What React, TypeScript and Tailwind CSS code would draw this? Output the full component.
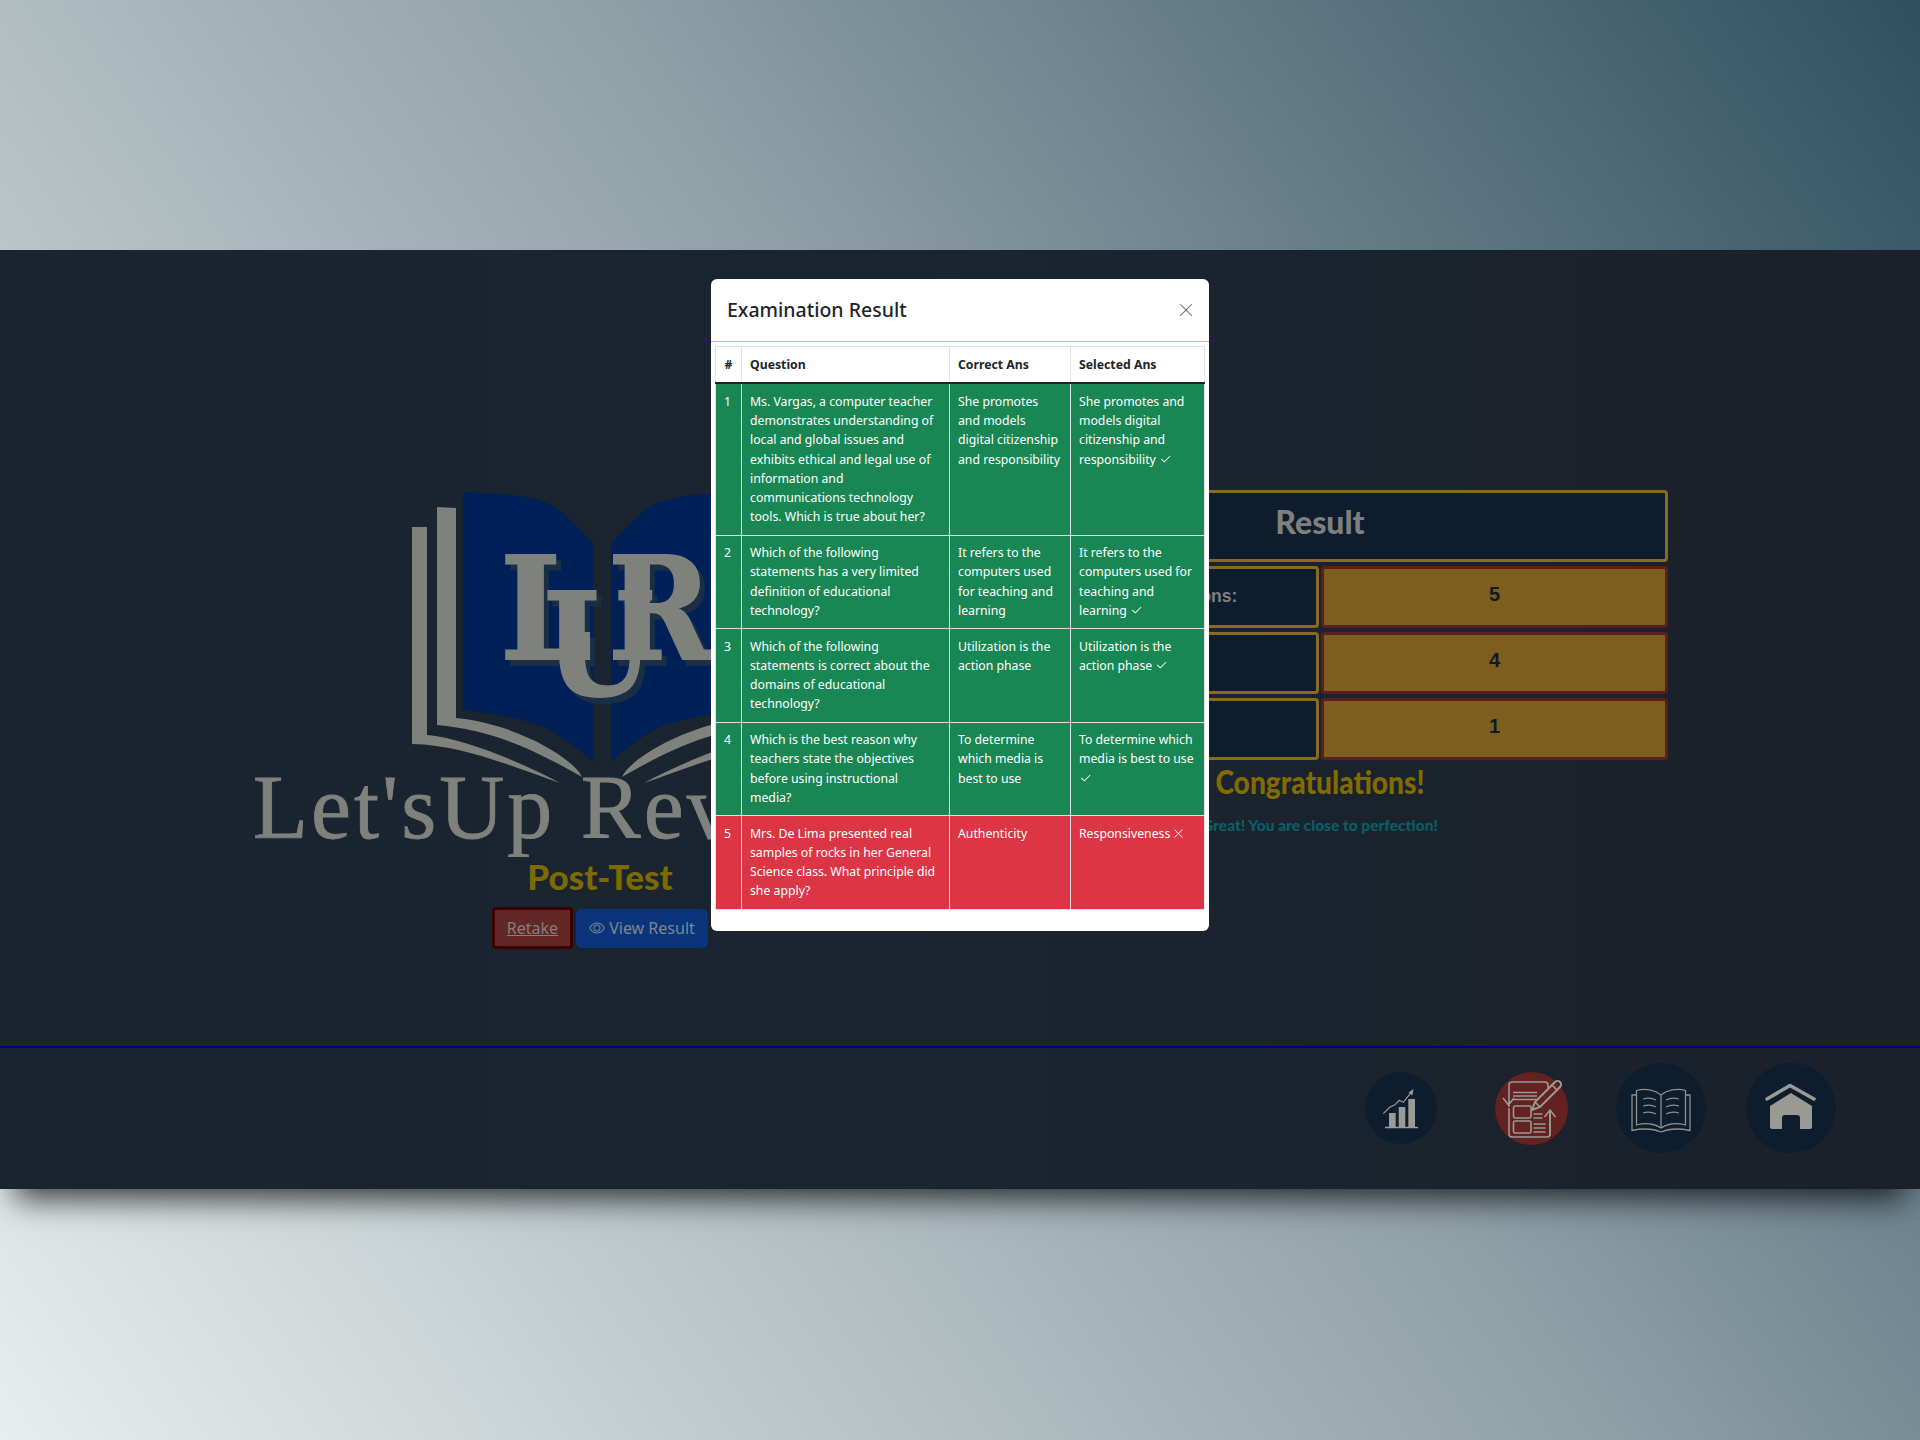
import { BsCheck2, BsEye, BsXLg } from 'react-icons/bs';

const rows = [
  {
    n: 1,
    q: 'Ms. Vargas, a computer teacher demonstrates understanding of local and global issues and exhibits ethical and legal use of information and communications technology tools. Which is true about her?',
    correct: 'She promotes and models digital citizenship and responsibility',
    selected: 'She promotes and models digital citizenship and responsibility',
    ok: true,
  },
  {
    n: 2,
    q: 'Which of the following statements has a very limited definition of educational technology?',
    correct: 'It refers to the computers used for teaching and learning',
    selected: 'It refers to the computers used for teaching and learning',
    ok: true,
  },
  {
    n: 3,
    q: 'Which of the following statements is correct about the domains of educational technology?',
    correct: 'Utilization is the action phase',
    selected: 'Utilization is the action phase',
    ok: true,
  },
  {
    n: 4,
    q: 'Which is the best reason why teachers state the objectives before using instructional media?',
    correct: 'To determine which media is best to use',
    selected: 'To determine which media is best to use',
    ok: true,
  },
  {
    n: 5,
    q: 'Mrs. De Lima presented real samples of rocks in her General Science class. What principle did she apply?',
    correct: 'Authenticity',
    selected: 'Responsiveness',
    ok: false,
  },
];

const stats = [
  { label: 'Number of Questions:', value: 5 },
  { label: 'Correct:', value: 4 },
  { label: 'Wrong:', value: 1 },
];

function BookLogo() {
  return (
    <svg viewBox="252 490 696 367" className="block w-[696px] h-[367px]">
      <path d="M463 492 C500 494 530 495 547 503 C565 512 580 530 593 543 V762 C580 750 565 738 550 730 C530 720 495 714 463 710 Z" fill="#002157" />
      <path d="M741 492 C704 494 674 495 657 503 C639 512 624 530 611 543 V762 C624 750 639 738 654 730 C674 720 709 714 741 710 Z" fill="#002157" />
      <path d="M437 507 L456 508 V718 C513 723 573 757 582 777 C530 747 490 730 437 725 Z" fill="#7f817c" />
      <path d="M412 527 H427 V735 C463 738 523 763 560 783 C513 767 463 745 412 744 Z" fill="#7f817c" />
      <path d="M767 507 L748 508 V718 C691 723 631 757 622 777 C674 747 714 730 767 725 Z" fill="#7f817c" />
      <path d="M792 527 H777 V735 C741 738 681 763 644 783 C691 767 741 745 792 744 Z" fill="#7f817c" />
      <g fontFamily="'DejaVu Serif', serif" fontWeight="700" fontSize="142" fill="#1a2f45" stroke="#1a2f45" strokeWidth="2">
        <text x="505" y="665" textLength="92" lengthAdjust="spacingAndGlyphs">L</text>
        <text x="549" y="701" textLength="110" lengthAdjust="spacingAndGlyphs">U</text>
        <text x="613" y="665" textLength="104" lengthAdjust="spacingAndGlyphs">R</text>
      </g>
      <g fontFamily="'DejaVu Serif', serif" fontWeight="700" fontSize="142" fill="#7f817c" stroke="#7f817c" strokeWidth="2">
        <text x="500" y="659" textLength="92" lengthAdjust="spacingAndGlyphs">L</text>
        <text x="544" y="695" textLength="110" lengthAdjust="spacingAndGlyphs">U</text>
        <text x="608" y="659" textLength="104" lengthAdjust="spacingAndGlyphs">R</text>
      </g>
      <text x="253" y="838" fontFamily="'Liberation Serif', serif" fontSize="90" letterSpacing="3" fill="#7f817c" stroke="#7f817c" strokeWidth="0.8">
        Let'sUp Review
      </text>
    </svg>
  );
}

function ChartIcon() {
  return (
    <svg viewBox="0 0 72 72" className="w-[72px] h-[72px]" fill="none">
      <path d="M24 41h6.700v14H24zM33.700 35h6.600v20h-6.600zM43.300 27H50v28h-6.700z" fill="#9a9a96" />
      <path d="M20 55.500h33" stroke="#9a9a96" strokeWidth="1.500" />
      <path d="M18.300 41.700 25 35l5 -2.300 4.300 -4.400 4 2 9.400 -12" stroke="#9a9a96" strokeWidth="1.200" />
      <path d="M48.500 17 43.500 20.500 47.500 23.500Z" fill="#9a9a96" />
    </svg>
  );
}

function ExamIcon() {
  return (
    <svg viewBox="0 0 73 73" className="w-[73px] h-[73px]" fill="none" stroke="#9a9a96" strokeWidth="1.600">
      <path d="M14 23V13a3 3 0 0 1 3 -3H50a3 3 0 0 1 3 3v3" />
      <path d="M55 41V62a3 3 0 0 1 -3 3H17a3 3 0 0 1 -3 -3V36" />
      <path d="M14 35V23M8 26l5.500 7 5.500 -7" />
      <path d="M55 64V38M49.500 45l5.500 -7 5.500 7" />
      <path d="M18 20.500h24M18 24h24M18 27.500h24" strokeWidth="1.300" />
      <rect x="18.500" y="34" width="17.500" height="12" rx="1.500" />
      <rect x="18.500" y="49" width="17.500" height="12" rx="1.500" />
      <path d="M38.500 42h9M38.500 46h9M38.500 52h12M38.500 56h12M38.500 60h12" strokeWidth="1.300" />
      <path d="M37 38l3 -8L60 10a3.500 3.500 0 0 1 5 5L45 35z" strokeWidth="2" />
      <path d="M40 30l5 5M57 13l5 5" />
    </svg>
  );
}

function OpenBookIcon() {
  return (
    <svg viewBox="0 0 90 90" className="w-[90px] h-[90px]" fill="none" stroke="#8d8f8c" strokeWidth="1.300">
      <path d="M45 32C39 27 29 25 20.500 27.500V62C29 59.500 39 60.500 45 65C51 60.500 61 59.500 69.500 62V27.500C61 25 51 27 45 32ZM45 32V65" />
      <path d="M20.500 32H16V67.500C28 65 38 66 45 69C52 66 62 65 74 67.500V32H69.500" />
      <path d="M27 36C32 34.500 36 35 40 37M27 43C32 41.500 36 42 40 44M27 50C32 48.500 36 49 40 51" />
      <path d="M63 36C58 34.500 54 35 50 37M63 43C58 41.500 54 42 50 44M63 50C58 48.500 54 49 50 51" />
    </svg>
  );
}

function HomeIcon() {
  return (
    <svg viewBox="0 0 90 90" className="w-[90px] h-[90px]">
      <path d="M21 36 44 22.500 68 36" fill="none" stroke="#9a9a95" strokeWidth="3.500" strokeLinecap="round" strokeLinejoin="round" />
      <path d="M45 30 66 43V64a2 2 0 0 1 -2 2H54V55a3 3 0 0 0 -3 -3H39a3 3 0 0 0 -3 3V66H26a2 2 0 0 1 -2 -2V43Z" fill="#9a9a95" />
    </svg>
  );
}

export default function App() {
  return (
    <div className="h-[1440px] pt-[250px] bg-[linear-gradient(55deg,#e8eded,#8fa0a7_55%,#2f4f60)] font-['Noto_Sans',sans-serif]">
      <div className="relative w-full h-[939px] bg-[linear-gradient(90deg,#1a2430,#1a2530_50%,#1b2029)] shadow-[0_25px_30px_-15px_rgba(0,0,0,0.75)]">
        <div className="h-[798px] pt-[240px] border-b-2 border-[#00008b]">
          <div className="mx-auto w-[1416px] grid grid-cols-2 gap-6">
            <div className="flex flex-col items-center">
              <BookLogo />
              <div className="font-['Lato'] font-black text-[35px] leading-[38px] text-[#7d6b00]">Post-Test</div>
              <div className="mt-[12px] flex items-center gap-[3px]">
                <a className="h-[42px] w-[81px] flex items-center justify-center rounded border-[3px] border-[#400000] bg-[#632726] text-[16px] text-[#7f7f7f] underline">
                  Retake
                </a>
                <button className="h-[39px] w-[132px] flex items-center justify-center gap-1 rounded-md bg-[#0a357c] text-[16px] text-[#7d8590]">
                  <BsEye className="w-4 h-4" />
                  View Result
                </button>
              </div>
            </div>
            <div className="flex flex-col gap-[4px]">
              <div className="h-[72px] flex items-center justify-center pb-[8px] rounded border-[3px] border-[#8a6a20] bg-[#0d1d2d] font-['Lato'] font-black text-[32px] text-[#7f7f7f]">
                Result
              </div>
              {stats.map((s) => (
                <div key={s.value} className="grid grid-cols-2 gap-[2px] h-[62px]">
                  <div className="flex items-center justify-center pb-[2px] rounded border-[3px] border-[#8a6a20] bg-[#0d1d2d] font-['Liberation_Sans'] font-bold text-[17.500px] text-[#7f7f7f]">
                    {s.label}
                  </div>
                  <div className="flex items-center justify-center pb-[6px] rounded border-[3px] border-[#5c1f1f] bg-[#7e5e1e] font-['Liberation_Sans'] font-bold text-[20px] text-[#101a24]">
                    {s.value}
                  </div>
                </div>
              ))}
              <div className="-mt-[1px] text-center font-['Lato'] font-black text-[32px] leading-[38px] text-[#826b00] scale-x-[0.88]">
                Congratulations!
              </div>
              <div className="mt-[8px] text-center font-['Lato'] font-black text-[15.500px] leading-[24px] text-[#0a5e66]">
                Great! You are close to perfection!
              </div>
            </div>
          </div>
        </div>
        <div className="flex justify-end pr-[64px] pt-[15px]">
          <div className="w-[130px] h-[90px] flex items-center justify-center">
            <div className="rounded-full bg-[#0d1d2d]"><ChartIcon /></div>
          </div>
          <div className="w-[130px] h-[90px] flex items-center justify-center">
            <div className="rounded-full bg-[#63211f]"><ExamIcon /></div>
          </div>
          <div className="w-[130px] h-[90px] flex items-center justify-center">
            <div className="rounded-full bg-[#0d1d2d]"><OpenBookIcon /></div>
          </div>
          <div className="w-[130px] h-[90px] flex items-center justify-center">
            <div className="rounded-full bg-[#0d1d2d]"><HomeIcon /></div>
          </div>
        </div>

        <div className="absolute left-[711px] top-[29px] w-[498px] h-[652px] rounded-md bg-white">
          <div className="h-[63px] flex items-center justify-between pl-4 pr-[15px] border-b-[1.500px] border-[#f2b93b]">
            <h5 className="text-[19.500px] font-medium text-[#212529]">Examination Result</h5>
            <BsXLg className="w-4 h-4 text-[#6b6b6b]" />
          </div>
          <div className="px-[4px] pt-[4px]">
            <table className="w-[489px] table-fixed border-collapse text-[12.250px] leading-[19.250px] text-white">
              <colgroup>
                <col className="w-[26px]" />
                <col className="w-[208px]" />
                <col className="w-[121px]" />
                <col className="w-[134px]" />
              </colgroup>
              <thead>
                <tr className="text-[#212529] text-left">
                  <th className="px-2 py-2 border border-[#dee2e6] border-b-2 border-b-[#212529] text-center">#</th>
                  <th className="px-2 py-2 border border-[#dee2e6] border-b-2 border-b-[#212529]">Question</th>
                  <th className="px-2 py-2 border border-[#dee2e6] border-b-2 border-b-[#212529]">Correct Ans</th>
                  <th className="px-2 py-2 border border-[#dee2e6] border-b-2 border-b-[#212529]">Selected Ans</th>
                </tr>
              </thead>
              <tbody>
                {rows.map((r) => (
                  <tr key={r.n} className={r.ok ? 'bg-[#198754]' : 'bg-[#dc3545]'}>
                    <td className="px-2 pt-[7.500px] pb-2 align-top border border-[#dee2e6]">{r.n}</td>
                    <td className="px-2 pt-[7.500px] pb-2 align-top border border-[#dee2e6]">{r.q}</td>
                    <td className="px-2 pt-[7.500px] pb-2 align-top border border-[#dee2e6]">{r.correct}</td>
                    <td className="px-2 pt-[7.500px] pb-2 align-top border border-[#dee2e6]">
                      {r.selected}{' '}
                      {r.ok ? (
                        <BsCheck2 className="inline w-[13px] h-[13px] align-[-2px]" />
                      ) : (
                        <BsXLg className="inline w-[11px] h-[11px] align-[-1px]" />
                      )}
                    </td>
                  </tr>
                ))}
              </tbody>
            </table>
          </div>
        </div>
      </div>
    </div>
  );
}
